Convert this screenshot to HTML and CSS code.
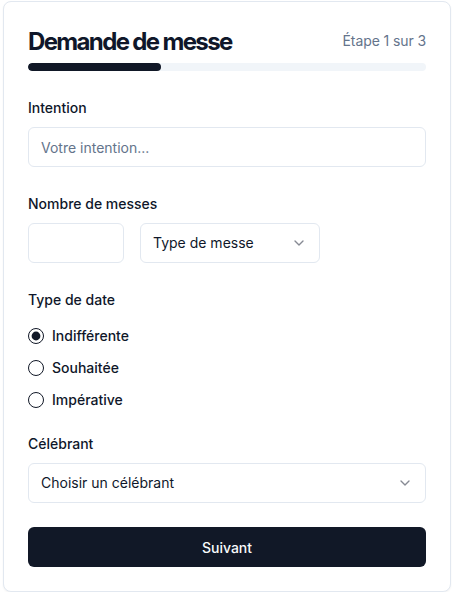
FILE: index.html
```html
<!DOCTYPE html>
<html lang="fr">
<head>
<meta charset="utf-8">
<title>Demande de messe</title>
<link rel="stylesheet" href="styles.css">
</head>
<body>
<div class="card">
  <div class="header">
    <h1 class="title">Demande de messe</h1>
    <span class="step">Étape 1 sur 3</span>
  </div>
  <div class="progress"><div class="progress-fill" style="width:33.333%"></div></div>

  <div class="group first">
    <label class="label" for="intention">Intention</label>
    <input id="intention" class="input" type="text" placeholder="Votre intention...">
  </div>

  <div class="group">
    <label class="label" for="nombre">Nombre de messes</label>
    <div class="row">
      <input id="nombre" class="input number" type="text">
      <div class="select type-select">
        <span>Type de messe</span>
        <svg class="chev" width="16" height="16" viewBox="0 0 24 24" fill="none" stroke="currentColor" stroke-width="2" stroke-linecap="round" stroke-linejoin="round"><path d="m6 9 6 6 6-6"/></svg>
      </div>
    </div>
  </div>

  <div class="group">
    <span class="label">Type de date</span>
    <div class="radios">
      <div class="radio-row">
        <svg class="radio" width="16" height="16" viewBox="0 0 16 16"><circle cx="8" cy="8" r="7.5" fill="none" stroke="#111827" stroke-width="1"/><circle cx="8" cy="8" r="4.4" fill="#111827"/></svg>
        <span class="radio-label">Indifférente</span>
      </div>
      <div class="radio-row">
        <svg class="radio" width="16" height="16" viewBox="0 0 16 16"><circle cx="8" cy="8" r="7.5" fill="none" stroke="#111827" stroke-width="1"/></svg>
        <span class="radio-label">Souhaitée</span>
      </div>
      <div class="radio-row">
        <svg class="radio" width="16" height="16" viewBox="0 0 16 16"><circle cx="8" cy="8" r="7.5" fill="none" stroke="#111827" stroke-width="1"/></svg>
        <span class="radio-label">Impérative</span>
      </div>
    </div>
  </div>

  <div class="group after-radios">
    <span class="label">Célébrant</span>
    <div class="select">
      <span>Choisir un célébrant</span>
      <svg class="chev" width="16" height="16" viewBox="0 0 24 24" fill="none" stroke="currentColor" stroke-width="2" stroke-linecap="round" stroke-linejoin="round"><path d="m6 9 6 6 6-6"/></svg>
    </div>
  </div>

  <button class="button" type="button">Suivant</button>
</div>
</body>
</html>
```

FILE: styles.css
```css
* { box-sizing: border-box; }
html, body { margin: 0; padding: 0; background: #ffffff; }
body {
  font-family: Inter, "Noto Sans", sans-serif;
  color: #0f172a;
  padding-top: 1px;
}
.card {
  width: 448px;
  margin: 0 0 0 3px;
  border: 1px solid #e2e8f0;
  border-radius: 8px;
  background: #fff;
  box-shadow: 0 1px 2px rgba(0,0,0,0.05);
  padding: 24px;
  display: flex;
  flex-direction: column;
}
.header {
  display: flex;
  align-items: center;
  justify-content: space-between;
  height: 32px;
}
.title {
  margin: 0;
  font-size: 24px;
  line-height: 32px;
  font-weight: 700;
  letter-spacing: -1.65px;
  color: #0f172a;
}
.step {
  font-size: 14px;
  line-height: 20px;
  color: #64748b;
  margin-top: -2px;
  letter-spacing: -0.1px;
}
.progress {
  margin-top: 5px;
  height: 8px;
  border-radius: 9999px;
  background: #f1f5f9;
  overflow: hidden;
}
.progress-fill {
  height: 100%;
  background: #111827;
  border-radius: 9999px;
}
.group {
  display: flex;
  flex-direction: column;
  margin-top: 27px;
}
.group.after-radios { margin-top: 24px; }
.label {
  font-size: 14px;
  line-height: 20px;
  font-weight: 500;
  color: #0f172a;
  margin-bottom: 9px;
}
.input {
  height: 40px;
  width: 100%;
  border: 1px solid #e2e8f0;
  border-radius: 6px;
  padding: 0 12px;
  font-family: inherit;
  font-size: 14px;
  color: #0f172a;
  background: #fff;
  outline: none;
}
.input::placeholder { color: #64748b; }
.row {
  display: flex;
  gap: 16px;
}
.input.number { width: 96px; flex: none; }
.select {
  height: 40px;
  border: 1px solid #e2e8f0;
  border-radius: 6px;
  padding: 0 12px 1px;
  display: flex;
  align-items: center;
  justify-content: space-between;
  font-size: 14px;
  color: #0f172a;
  background: #fff;
}
.type-select { width: 180px; flex: none; }
.chev { opacity: 0.5; color: #0f172a; flex: none; }
.radios {
  display: flex;
  flex-direction: column;
  gap: 12px;
  margin-top: 7px;
}
.radio-row {
  display: flex;
  align-items: center;
  gap: 8px;
  height: 20px;
}
.radio { flex: none; display: block; }
.radio-label {
  font-size: 14px;
  line-height: 20px;
  font-weight: 500;
  color: #0f172a;
}
.button {
  margin-top: 24px;
  height: 40px;
  width: 100%;
  border: none;
  border-radius: 6px;
  background: #111827;
  color: #f8fafc;
  font-family: inherit;
  font-size: 14px;
  font-weight: 500;
}
```
